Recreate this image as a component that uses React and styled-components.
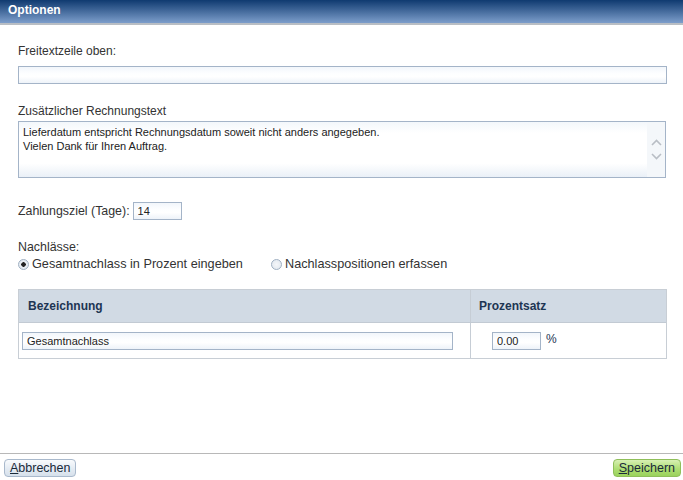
import React from 'react';
import styled, { createGlobalStyle } from 'styled-components';

const Global = createGlobalStyle`
  html, body { margin: 0; padding: 0; background: #fff; }
  body { font-family: "Liberation Sans", Arial, sans-serif; font-size: 12px; color: #333; }
`;

const Page = styled.div`
  width: 683px;
  height: 480px;
  display: flex;
  flex-direction: column;
  overflow: hidden;
`;

const TitleBar = styled.div`
  height: 25px;
  background: linear-gradient(#0f3a70, #7d9ecb);
  border-bottom: 2px solid #b9bec4;
  color: #fff;
  font-weight: bold;
  font-size: 12px;
  display: flex;
  align-items: center;
  padding-left: 8px;
  padding-bottom: 3px;
  box-sizing: border-box;
`;

const Body = styled.div`
  flex: 1;
  padding: 19px 16px 0 18px;
  display: flex;
  flex-direction: column;
`;

const Label = styled.div`
  line-height: 14px;
  font-size: ${p => p.$fs ?? 12}px;
  margin-bottom: ${p => p.$mb ?? 7}px;
`;

const fieldBg = `linear-gradient(#f2f6fb, #fdfeff 40%, #fff 60%, #eef3f9)`;

const TextInput = styled.input`
  box-sizing: border-box;
  width: ${p => p.$w || '100%'};
  height: 18px;
  border: 1px solid #a4b4c8;
  background: ${fieldBg};
  font: 11px "Liberation Sans", Arial, sans-serif;
  color: #222;
  padding: 0 4px;
  outline: none;
`;

const Area = styled.div`
  box-sizing: border-box;
  width: 648px;
  height: 57px;
  border: 1px solid #a4b4c8;
  background: linear-gradient(#f3f7fb, #fff 20%, #fff 75%, #eaf0f7);
  display: flex;
  margin-top: 3px;
`;

const AreaText = styled.div`
  flex: 1;
  padding: 3px 4px;
  font-size: 11px;
  line-height: 14px;
  color: #222;
`;

const Scroll = styled.div`
  width: 18px;
  display: flex;
  flex-direction: column;
  justify-content: center;
  align-items: center;
  gap: 7px;
  background: #f4f7fa;
`;

const Section = styled.div`
  margin-top: ${p => p.$mt}px;
`;

const Row = styled.div`
  display: flex;
  align-items: center;
  gap: ${p => p.$gap ?? 0}px;
  font-size: ${p => p.$fs ?? 12}px;
`;

const Radio = styled.label`
  display: flex;
  align-items: center;
  gap: 3px;
  width: ${p => p.$w}px;
  color: #333;
  font-size: 12.7px;
`;

const Dot = styled.span`
  width: 9px;
  height: 9px;
  border-radius: 50%;
  border: 1px solid #9fb0c2;
  background: radial-gradient(circle, ${p => (p.$on ? '#222 0, #222 2px, #e8edf3 2.5px' : '#f4f6f9 0')}, #dfe6ee);
  box-sizing: content-box;
`;

const Table = styled.div`
  margin-top: 18px;
  width: 649px;
  border: 1px solid #c8ced5;
  box-sizing: border-box;
`;

const Grid = styled.div`
  display: grid;
  grid-template-columns: 451px 1fr;
  ${p => p.$head && `background: #d1dae4; border-bottom: 1px solid #c2cad3;`}
  height: ${p => p.$h}px;
`;

const Cell = styled.div`
  display: flex;
  align-items: center;
  padding-left: ${p => p.$pl}px;
  ${p => p.$line && 'border-left: 1px solid #c6cdd5;'}
  color: #1d3553;
  font-weight: ${p => (p.$head ? 'bold' : 'normal')};
  font-size: 12px;
`;

const Percent = styled.span`
  margin-left: 5px;
  margin-top: -3px;
`;

const Footer = styled.div`
  border-top: 1px solid #b8b8b8;
  height: 27px;
  display: flex;
  justify-content: space-between;
  align-items: flex-start;
  padding: 5px 2px 0 4px;
  box-sizing: border-box;
`;

const Button = styled.button`
  height: 18px;
  padding: 0 5px;
  border-radius: 4px;
  border: 1px solid ${p => (p.$green ? '#8fbf5a' : '#a9b9cc')};
  background: ${p =>
    p.$green
      ? 'linear-gradient(#d8f0b4, #aede74 55%, #9ad25c)'
      : 'linear-gradient(#f9fbfd, #e4ebf3 55%, #d6e0eb)'};
  font: 12.5px "Liberation Sans", Arial, sans-serif;
  color: #1a2a3a;
  line-height: 16px;
  u { text-decoration: underline; }
`;

const Chevron = ({ up }) => (
  <svg width="11" height="7" viewBox="0 0 11 7">
    <path d={up ? 'M1 6 L5.5 1.5 L10 6' : 'M1 1 L5.5 5.5 L10 1'} fill="none" stroke="#b9bec5" strokeWidth="1.6" />
  </svg>
);

export default function App() {
  return (
    <Page>
      <Global />
      <TitleBar>Optionen</TitleBar>
      <Body>
        <Label $mb={8}>Freitextzeile oben:</Label>
        <TextInput $w="649px" defaultValue="" />
        <Section $mt={20}>
          <Label $mb={0}>Zusätzlicher Rechnungstext</Label>
          <Area>
            <AreaText>
              Lieferdatum entspricht Rechnungsdatum soweit nicht anders angegeben.
              <br />
              Vielen Dank für Ihren Auftrag.
            </AreaText>
            <Scroll>
              <Chevron up />
              <Chevron />
            </Scroll>
          </Area>
        </Section>
        <Section $mt={24}>
          <Row $gap={3} $fs={12.4}>
            <span>Zahlungsziel (Tage):</span>
            <TextInput $w="49px" defaultValue="14" />
          </Row>
        </Section>
        <Section $mt={20}>
          <Label $mb={3} $fs={12.4}>Nachlässe:</Label>
          <Row>
            <Radio $w={253}>
              <Dot $on />
              Gesamtnachlass in Prozent eingeben
            </Radio>
            <Radio>
              <Dot />
              Nachlasspositionen erfassen
            </Radio>
          </Row>
        </Section>
        <Table>
          <Grid $head $h={32}>
            <Cell $head $pl={9}>Bezeichnung</Cell>
            <Cell $head $line $pl={8}>Prozentsatz</Cell>
          </Grid>
          <Grid $h={35}>
            <Cell $pl={3}>
              <TextInput $w="431px" defaultValue="Gesamtnachlass" />
            </Cell>
            <Cell $line $pl={21}>
              <TextInput $w="49px" defaultValue="0.00" />
              <Percent>%</Percent>
            </Cell>
          </Grid>
        </Table>
      </Body>
      <Footer>
        <Button>
          <u>A</u>bbrechen
        </Button>
        <Button $green>
          <u>S</u>peichern
        </Button>
      </Footer>
    </Page>
  );
}
